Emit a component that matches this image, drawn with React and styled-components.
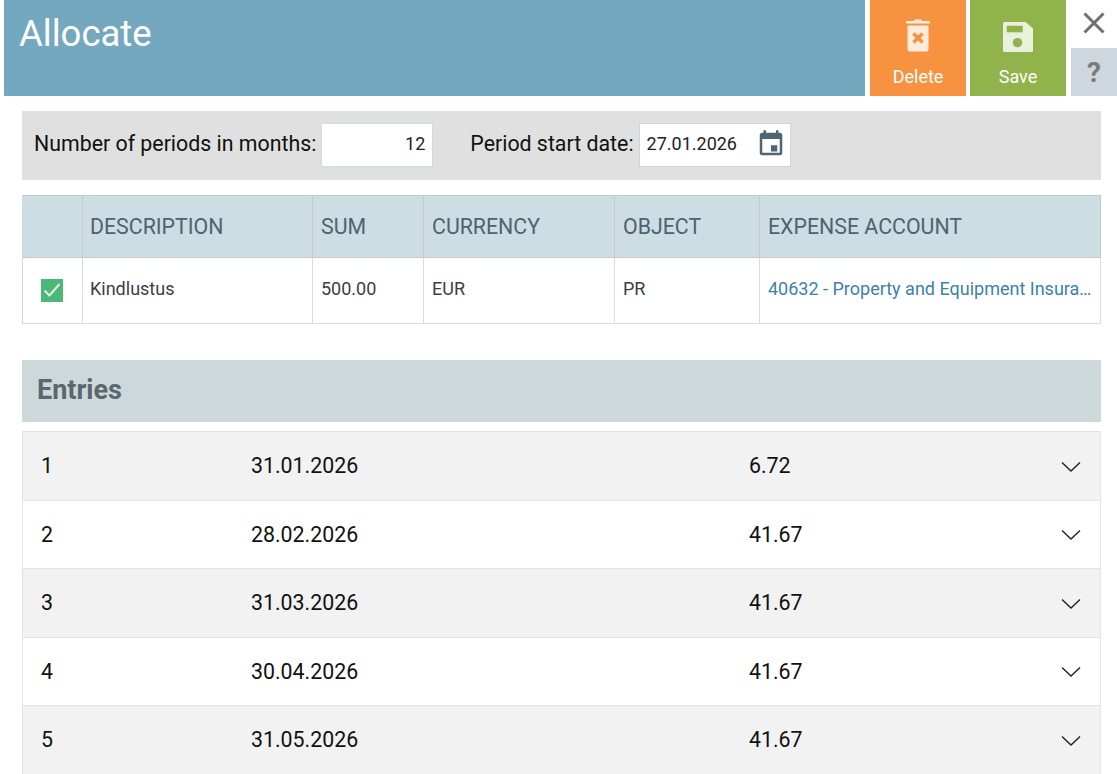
import React from 'react';
import styled, { createGlobalStyle } from 'styled-components';

const GlobalStyle = createGlobalStyle`
	html, body {
		margin: 0;
		padding: 0;
		height: 774px;
		overflow: hidden;
		background: #fff;
		font-family: Roboto, "Liberation Sans", sans-serif;
	}
	* {
		box-sizing: border-box;
	}
`;

const Header = styled.header`
	display: flex;
	height: 96px;
	padding-left: 4px;
`;

const TitleBar = styled.div`
	width: 861px;
	background: #74a8bf;
	color: #fff;
	font-size: 36.5px;
	line-height: 67px;
	padding-left: 15px;
`;

const ActionButton = styled.button`
	width: 96px;
	height: 96px;
	margin-left: ${(p) => p.$gap}px;
	border: 0;
	padding: 0;
	background: ${(p) => p.$color};
	color: #fff;
	font: 400 18px Roboto, sans-serif;
	display: flex;
	flex-direction: column;
	align-items: center;
`;

const IconSlot = styled.span`
	height: 66px;
	padding-bottom: 14px;
	display: flex;
	align-items: flex-end;
`;

const SideActions = styled.div`
	width: 46px;
	margin-left: 5px;
	display: flex;
	flex-direction: column;
`;

const CloseButton = styled.div`
	height: 48px;
	display: flex;
	align-items: center;
	justify-content: center;
	padding-bottom: 2px;
`;

const HelpButton = styled.div`
	height: 48px;
	background: #ced6de;
	color: #7a7a7a;
	font-size: 28px;
	font-weight: 700;
	display: flex;
	align-items: center;
	justify-content: center;
`;

const Content = styled.main`
	margin: 15px 16px 0 22px;
`;

const Toolbar = styled.div`
	height: 69px;
	background: #e0e0e0;
	display: flex;
	align-items: center;
	padding: 0 12px 2px;
	font-size: 21.33px;
	color: #111;
`;

const FieldLabel = styled.label`
	margin-right: 5px;
	margin-left: ${(p) => p.$offset || 0}px;
	position: relative;
	top: -1px;
`;

const NumberBox = styled.div`
	width: 112px;
	height: 44px;
	background: #fff;
	border: 1px solid #d3dae2;
	text-align: right;
	padding-right: 7px;
	line-height: 40px;
	font-size: 18px;
	color: #222;
`;

const DateBox = styled.div`
	width: 152px;
	height: 44px;
	background: #fff;
	border: 1px solid #d0d5da;
	display: flex;
	align-items: center;
	justify-content: space-between;
	padding: 0 4px 2px 7px;
	font-size: 18px;
	color: #222;
`;

const Grid = styled.div`
	margin-top: 15px;
	display: grid;
	grid-template-columns: 60px 230px 111px 191px 145px 341px;
	border-left: 1px solid #d6d6d6;
`;

const HeadCell = styled.div`
	height: 63px;
	background: #cddde4;
	border: solid #c4cace;
	border-width: 1px 1px 1px 0;
	padding: 0 8px 0 ${(p) => (p.$tight ? 7 : 8)}px;
	font-size: 21.33px;
	line-height: 62px;
	color: #4e636e;
`;

const BodyCell = styled.div`
	height: 66px;
	border-right: 1px solid #dcdcdc;
	border-bottom: 1px solid #dcdcdc;
	padding: 0 8px 0 ${(p) => (p.$tight ? 7 : 8)}px;
	font-size: 18px;
	line-height: 61px;
	color: ${(p) => (p.$link ? '#3c82a8' : '#3a3f44')};
	white-space: nowrap;
	overflow: hidden;
	text-overflow: ellipsis;
`;

const CheckCell = styled(BodyCell)`
	display: flex;
	align-items: center;
	justify-content: center;
	padding: 0 2px 0 0;
`;

const CheckBox = styled.span`
	width: 22px;
	height: 23px;
	margin-top: -1px;
	background: #4cb877;
	display: flex;
	align-items: center;
	justify-content: center;
`;

const SectionHead = styled.h2`
	margin: 36px 0 0;
	height: 62px;
	background: #cdd8da;
	color: #59676f;
	font-size: 27px;
	font-weight: 700;
	line-height: 61px;
	padding-left: 15px;
`;

const EntryList = styled.div`
	margin-top: 9px;
	border-top: 1px solid #e3e4e8;
	border-left: 1px solid #e3e4e8;
	border-right: 1px solid #e3e4e8;
`;

const EntryRow = styled.div`
	height: 68.5px;
	display: grid;
	grid-template-columns: 210px 498px 1fr 39px;
	align-items: center;
	padding-left: 18px;
	background: ${(p) => (p.$odd ? '#f2f2f2' : '#fff')};
	border-bottom: 1px solid #e3e4e8;
	font-size: 21.33px;
	color: #111;
`;

const Chevron = styled.svg`
	display: block;
	margin-top: 2px;
`;

const columns = ['', 'DESCRIPTION', 'SUM', 'CURRENCY', 'OBJECT', 'EXPENSE ACCOUNT'];

const entries = [
	['1', '31.01.2026', '6.72'],
	['2', '28.02.2026', '41.67'],
	['3', '31.03.2026', '41.67'],
	['4', '30.04.2026', '41.67'],
	['5', '31.05.2026', '41.67'],
];

const App = () => {
	return (
		<>
			<GlobalStyle />
			<Header>
				<TitleBar>Allocate</TitleBar>
				<ActionButton $color="#f69240" $gap={5}>
					<IconSlot>
						<svg width="26" height="33" viewBox="0 0 26 33">
							<path fill="#fdebdb" d="M9 2 L10 0.5 H16 L17 2 H25 V4.5 H1 V2 Z" />
							<path fill="#fdebdb" d="M2.5 6.5 H23.5 V30.5 a2 2 0 0 1 -2 2 H4.5 a2 2 0 0 1 -2 -2 Z" />
							<path stroke="#f69240" strokeWidth="3.4" d="M8.5 14.5 L17.5 23.5 M17.5 14.5 L8.5 23.5" />
						</svg>
					</IconSlot>
					Delete
				</ActionButton>
				<ActionButton $color="#90b34b" $gap={4}>
					<IconSlot>
						<svg width="30" height="30" viewBox="0 0 32 32">
							<path fill="#e9f0dc" d="M2 0 H24 L32 7 V30 a2 2 0 0 1 -2 2 H2 a2 2 0 0 1 -2 -2 V2 a2 2 0 0 1 2 -2 Z" />
							<rect fill="#90b34b" x="4" y="4" width="17" height="7" />
							<circle fill="#90b34b" cx="15.5" cy="22" r="5" />
						</svg>
					</IconSlot>
					Save
				</ActionButton>
				<SideActions>
					<CloseButton>
						<svg width="22" height="22" viewBox="0 0 22 22">
							<path stroke="#6f6f6f" strokeWidth="3" d="M1.5 1.5 L20.5 20.5 M20.5 1.5 L1.5 20.5" />
						</svg>
					</CloseButton>
					<HelpButton>?</HelpButton>
				</SideActions>
			</Header>
			<Content>
				<Toolbar>
					<FieldLabel>Number of periods in months:</FieldLabel>
					<NumberBox>12</NumberBox>
					<FieldLabel $offset={37}>Period start date:</FieldLabel>
					<DateBox>
						27.01.2026
						<svg width="30" height="30" viewBox="0 0 24 24">
							<path
								fill="#4e6672"
								d="M19 3h-1V1h-2v2H8V1H6v2H5a2 2 0 0 0-2 2v14a2 2 0 0 0 2 2h14a2 2 0 0 0 2-2V5a2 2 0 0 0-2-2zm0 16H5V8h14v11zM12 13h5v5h-5z"
							/>
						</svg>
					</DateBox>
				</Toolbar>
				<Grid>
					{columns.map((c, i) => (
						<HeadCell key={c} $tight={i === 1}>
							{c}
						</HeadCell>
					))}
					<CheckCell>
						<CheckBox>
							<svg width="18" height="16" viewBox="0 0 18 16">
								<path fill="none" stroke="#dff3e6" strokeWidth="2" d="M1.5 8.5 L6.5 13.5 L16.5 2" />
							</svg>
						</CheckBox>
					</CheckCell>
					<BodyCell $tight>Kindlustus</BodyCell>
					<BodyCell>500.00</BodyCell>
					<BodyCell>EUR</BodyCell>
					<BodyCell>PR</BodyCell>
					<BodyCell $link>40632 - Property and Equipment Insurance</BodyCell>
				</Grid>
				<SectionHead>Entries</SectionHead>
				<EntryList>
					{entries.map(([n, date, sum], i) => (
						<EntryRow key={n} $odd={i % 2 === 0}>
							<span>{n}</span>
							<span>{date}</span>
							<span>{sum}</span>
							<Chevron width="20" height="12" viewBox="0 0 20 12">
								<path fill="none" stroke="#222" strokeWidth="1.4" d="M1 1.5 L10 10 L19 1.5" />
							</Chevron>
						</EntryRow>
					))}
				</EntryList>
			</Content>
		</>
	);
};

export default App;
